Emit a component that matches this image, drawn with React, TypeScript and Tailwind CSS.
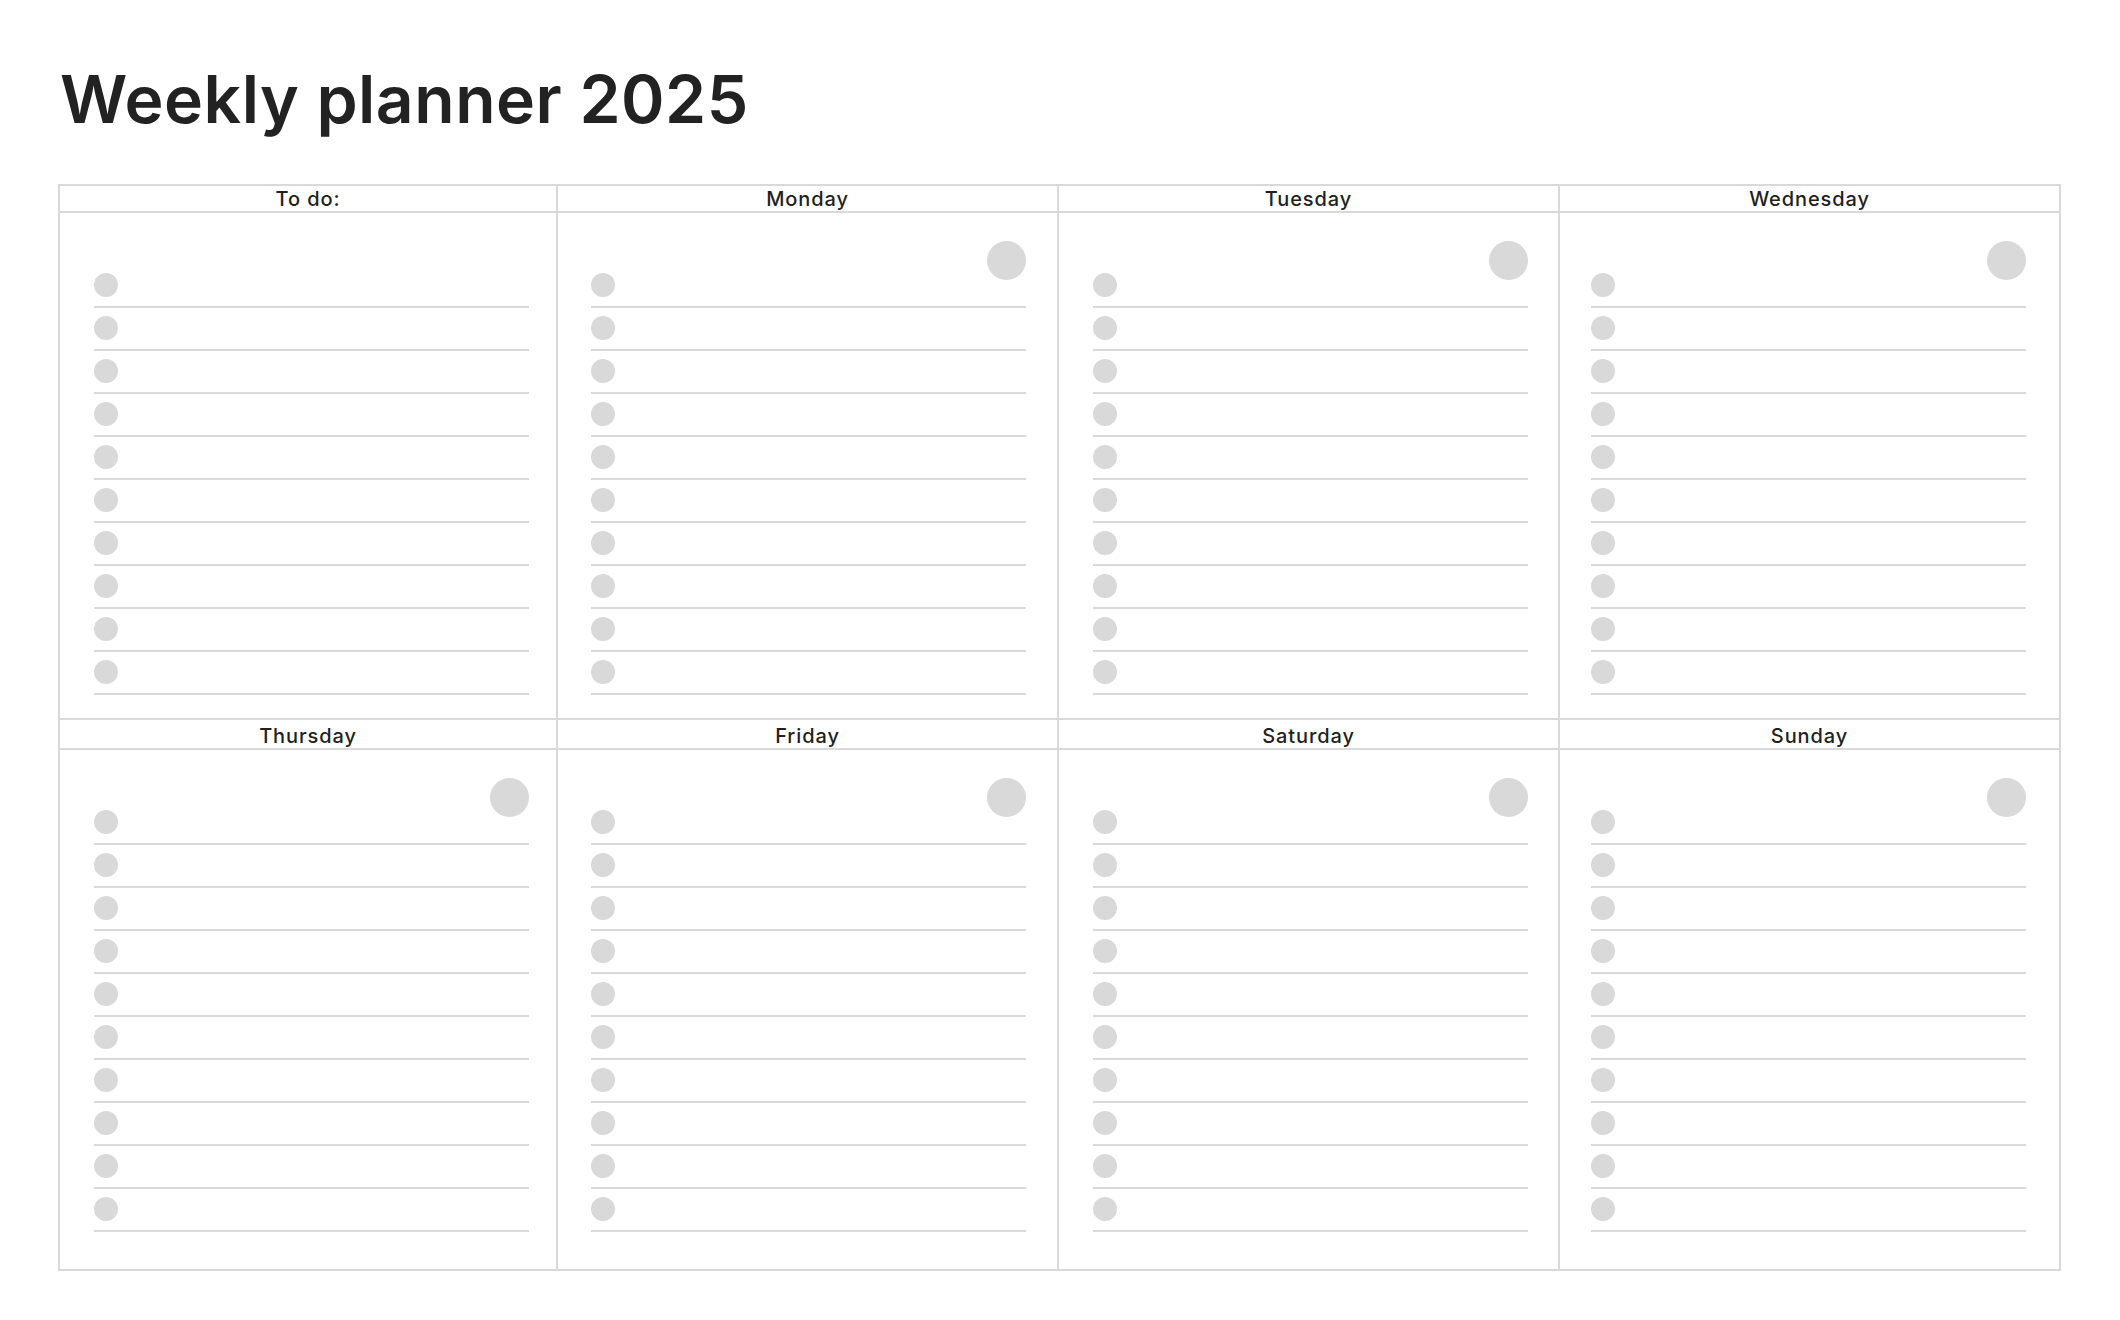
import React from "react";

const TOP = ["To do:", "Monday", "Tuesday", "Wednesday"];
const BOTTOM = ["Thursday", "Friday", "Saturday", "Sunday"];
const PADS = ["pl-[34px]", "pl-[33px]", "pl-[34px]", "pl-[31px]"];

function Cell({ showBig, idx }: { showBig: boolean; idx: number }) {
  return (
    <div className={"pt-[28px] " + PADS[idx] + (idx === 3 ? "" : " border-r-2 border-[#d9d9d9]")}>
      <div className="w-[435px]">
        <div className="h-[39px] flex justify-end">
          {showBig && <div className="w-[39px] h-[39px] rounded-full bg-[#d9d9d9]" />}
        </div>
        <div className="-mt-[7px] flex flex-col">
          {Array.from({ length: 10 }).map((_, i) => (
            <div key={i} className="flex flex-col h-[43px]">
              <div className="w-[24px] h-[24px] rounded-full bg-[#d9d9d9]" />
              <div className="mt-[9px] h-[2px] bg-[#d9d9d9]" />
            </div>
          ))}
        </div>
      </div>
    </div>
  );
}

function Block({ names, headH, bodyH, first }: { names: string[]; headH: string; bodyH: string; first: boolean }) {
  return (
    <div>
      <div className={"grid grid-cols-[498px_501px_501px_1fr] border-b-2 border-[#d9d9d9] " + headH}>
        {names.map((n, i) => (
          <div
            key={n}
            className={
              "flex items-end justify-center pb-[2px] text-[20px] leading-none font-medium tracking-[0.9px] text-[#231f20] " +
              (i < 3 ? "border-r-2 border-[#d9d9d9]" : "")
            }
          >
            {n}
          </div>
        ))}
      </div>
      <div className={"grid grid-cols-[498px_501px_501px_1fr] " + bodyH}>
        {names.map((n, i) => (
          <Cell key={n} showBig={!(first && i === 0)} idx={i} />
        ))}
      </div>
    </div>
  );
}

export default function App() {
  return (
    <div
      className="w-[2120px] h-[1320px] bg-white pl-[58px] pt-[66px]"
      style={{ fontFamily: "Inter, 'Noto Sans', sans-serif" }}
    >
      <h1 className="text-[66px] leading-none font-semibold text-[#222222] tracking-[0.5px] pl-[2px]">
        Weekly planner 2025
      </h1>
      <div className="mt-[52px] w-[2003px] border-2 border-[#d9d9d9]">
        <div className="border-b-2 border-[#d9d9d9]">
          <Block names={TOP} headH="h-[27px]" bodyH="h-[505px]" first={true} />
        </div>
        <Block names={BOTTOM} headH="h-[30px]" bodyH="h-[519px]" first={false} />
      </div>
    </div>
  );
}
